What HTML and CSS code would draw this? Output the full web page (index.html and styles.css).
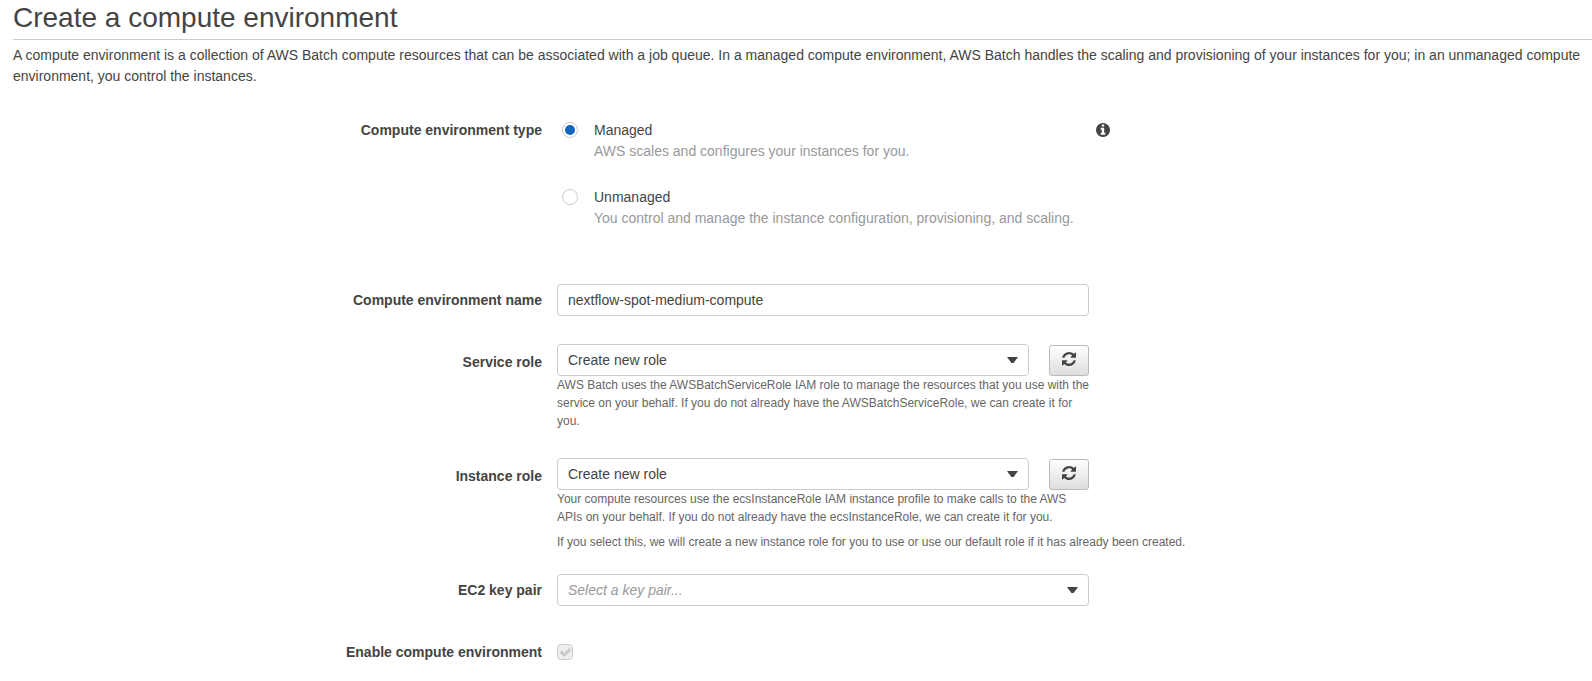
FILE: index.html
```html
<!DOCTYPE html>
<html lang="en">
<head>
<meta charset="utf-8">
<title>Create a compute environment</title>
<link rel="stylesheet" href="styles.css">
</head>
<body>
<svg class="defs" aria-hidden="true">
  <symbol id="refresh" viewBox="0 0 1536 1536"><path d="M1511 928q0 5-1 7-64 268-268 434.500t-478 166.500q-146 0-282.500-55t-243.500-157l-129 129q-19 19-45 19t-45-19-19-45v-448q0-26 19-45t45-19h448q26 0 45 19t19 45-19 45l-137 137q71 66 161 102t187 36q134 0 250-65t186-179q11-17 53-117 8-23 30-23h192q13 0 22.500 9.500t9.500 22.500zm25-800v448q0 26-19 45t-45 19h-448q-26 0-45-19t-19-45 19-45l138-138q-148-137-349-137-134 0-250 65t-186 179q-11 17-53 117-8 23-30 23h-199q-13 0-22.500-9.500t-9.500-22.500v-7q65-268 270-434.500t480-166.500q146 0 284 55.500t245 156.500l130-129q19-19 45-19t45 19 19 45z"/></symbol>
</svg>
<header class="page-header">
  <h1 class="title">Create a compute environment</h1>
  <p class="intro">A compute environment is a collection of AWS Batch compute resources that can be associated with a job queue. In a managed compute environment, AWS Batch handles the scaling and provisioning of your instances for you; in an unmanaged compute environment, you control the instances.</p>
</header>
<main class="form">
  <div class="row row-type">
    <span class="label">Compute environment type</span>
    <div class="options">
      <label class="option">
        <span class="radio radio-on"></span>
        <span class="option-text">Managed<span class="option-note">AWS scales and configures your instances for you.</span></span>
      </label>
      <label class="option">
        <span class="radio"></span>
        <span class="option-text">Unmanaged<span class="option-note">You control and manage the instance configuration, provisioning, and scaling.</span></span>
      </label>
    </div>
    <svg class="info" viewBox="128 128 1536 1536"><path d="M1152 1376v-160q0-14-9-23t-23-9h-96v-512q0-14-9-23t-23-9h-320q-14 0-23 9t-9 23v160q0 14 9 23t23 9h96v320h-96q-14 0-23 9t-9 23v160q0 14 9 23t23 9h448q14 0 23-9t9-23zm-128-896v-160q0-14-9-23t-23-9h-192q-14 0-23 9t-9 23v160q0 14 9 23t23 9h192q14 0 23-9t9-23zm640 416q0 209-103 385.500t-279.500 279.500-385.500 103-385.500-103-279.500-279.500-103-385.500 103-385.500 279.500-279.500 385.500-103 385.500 103 279.500 279.500 103 385.500z"/></svg>
  </div>
  <div class="row row-name">
    <span class="label">Compute environment name</span>
    <div class="control">nextflow-spot-medium-compute</div>
  </div>
  <div class="row row-service">
    <span class="label label-low">Service role</span>
    <div class="field">
      <div class="control-line">
        <div class="control">Create new role<span class="caret"></span></div>
        <button class="refresh"><svg class="refresh-icon"><use href="#refresh"/></svg></button>
      </div>
      <p class="hint">AWS Batch uses the AWSBatchServiceRole IAM role to manage the resources that you use with the service on your behalf. If you do not already have the AWSBatchServiceRole, we can create it for <br>you.</p>
    </div>
  </div>
  <div class="row row-instance">
    <span class="label label-low">Instance role</span>
    <div class="field">
      <div class="control-line">
        <div class="control">Create new role<span class="caret"></span></div>
        <button class="refresh"><svg class="refresh-icon"><use href="#refresh"/></svg></button>
      </div>
      <p class="hint">Your compute resources use the ecsInstanceRole IAM instance profile to make calls to the AWS APIs on your behalf. If you do not already have the ecsInstanceRole, we can create it for you.</p>
      <p class="hint hint-wide">If you select this, we will create a new instance role for you to use or use our default role if it has already been created.</p>
    </div>
  </div>
  <div class="row row-key">
    <span class="label">EC2 key pair</span>
    <div class="control placeholder">Select a key pair...<span class="caret"></span></div>
  </div>
  <div class="row row-enable">
    <span class="label">Enable compute environment</span>
    <span class="checkbox"><svg class="check" viewBox="121 334 1550 1188"><path d="M1671 566q0 40-28 68l-724 724-136 136q-28 28-68 28t-68-28l-136-136-362-362q-28-28-28-68t28-68l136-136q28-28 68-28t68 28l294 295 656-657q28-28 68-28t68 28l136 136q28 28 28 68z"/></svg></span>
  </div>
</main>
</body>
</html>
```

FILE: styles.css
```css
* { box-sizing: border-box; }

body {
  margin: 0;
  overflow: hidden;
  background: #fff;
  color: #444;
  font: 14px/21px "Liberation Sans", Arial, sans-serif;
}

.defs { display: none; }

.page-header { padding-left: 13px; }

.title {
  margin: 0;
  height: 40px;
  border-bottom: 1px solid #ccc;
  font-size: 28px;
  font-weight: 400;
  line-height: 35px;
}

.intro {
  margin: 5px 0 0;
  padding-right: 10px;
}

.form {
  display: flex;
  flex-direction: column;
  padding-top: 32px;
}

.row {
  display: grid;
  grid-template-columns: 542px 532px auto;
  column-gap: 15px;
  justify-content: start;
  align-items: start;
}

.row-type { height: 165px; padding-top: 1px; }
.row-name { height: 60px; }
.row-service { height: 114px; }
.row-instance { height: 116px; }
.row-key { height: 63px; }

.label {
  padding-top: 6px;
  font-weight: 700;
  text-align: right;
}

.label-low { padding-top: 8px; }
.row-type .label { padding-top: 0; }
.row-enable .label { padding-top: 5px; }

.options {
  display: flex;
  flex-direction: column;
  gap: 25px;
  padding-left: 5px;
}

.option { display: flex; gap: 16px; }

.radio {
  display: grid;
  place-items: center;
  width: 16px;
  height: 16px;
  margin-top: 2px;
  border: 1px solid #ccc;
  border-radius: 50%;
}

.radio-on::after {
  content: "";
  width: 10px;
  height: 10px;
  border-radius: 50%;
  background: #1166bb;
}

.option-text { white-space: nowrap; }
.option-note { display: block; color: #999; }

.info {
  width: 14px;
  height: 14px;
  margin: 3px 0 0 -8px;
  fill: #444;
}

.field { min-width: 0; }

.control-line { display: flex; gap: 20px; }

.control {
  display: flex;
  flex: 1;
  align-items: center;
  justify-content: space-between;
  height: 32px;
  padding: 0 10px;
  border: 1px solid #ccc;
  border-radius: 4px;
}

.placeholder { color: #999; font-style: italic; }

.caret {
  width: 11px;
  height: 6px;
  background: #444;
  clip-path: polygon(0 0, 100% 0, 60% 100%, 40% 100%);
}

.refresh {
  display: grid;
  place-items: center;
  width: 40px;
  height: 31px;
  margin-top: 1px;
  padding: 0 0 3px;
  border: 1px solid #bbb;
  border-radius: 3px;
  background: linear-gradient(#fff, #ddd);
}

.refresh-icon { width: 14px; height: 14px; fill: #444; }

.hint {
  margin: 0 -3px 0 0;
  color: #666;
  font-size: 12px;
  line-height: 18px;
}

.hint-wide { margin-top: 7px; white-space: nowrap; }

.checkbox {
  display: grid;
  place-items: center;
  width: 16px;
  height: 16px;
  margin-top: 7px;
  border: 1px solid #ccc;
  border-radius: 4px;
  background: #eee;
}

.check { width: 11px; height: 9px; fill: #c8c8c8; }
```
